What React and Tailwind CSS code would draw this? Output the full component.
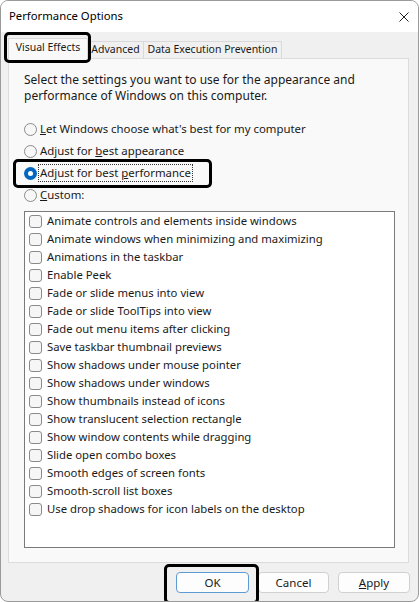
import React from 'react';

const font = { fontFamily: '"Noto Sans", "Open Sans", sans-serif' };

const effects = [
  'Animate controls and elements inside windows',
  'Animate windows when minimizing and maximizing',
  'Animations in the taskbar',
  'Enable Peek',
  'Fade or slide menus into view',
  'Fade or slide ToolTips into view',
  'Fade out menu items after clicking',
  'Save taskbar thumbnail previews',
  'Show shadows under mouse pointer',
  'Show shadows under windows',
  'Show thumbnails instead of icons',
  'Show translucent selection rectangle',
  'Show window contents while dragging',
  'Slide open combo boxes',
  'Smooth edges of screen fonts',
  'Smooth-scroll list boxes',
  'Use drop shadows for icon labels on the desktop',
];

const Radio = ({ checked, children, focus }) => (
  <div className="flex items-center h-[22px] text-[11.4px]">
    {checked ? (
      <span className="w-[13px] h-[13px] rounded-full bg-[#0067c0] flex items-center justify-center flex-none">
        <span className="w-[5px] h-[5px] rounded-full bg-white" />
      </span>
    ) : (
      <span className="w-[13px] h-[13px] rounded-full border border-[#8a8a8a] bg-[#f7f7f7] flex-none" />
    )}
    <span className={`ml-[2px] px-[1px] leading-[16px] ${focus ? 'outline outline-1 outline-dotted outline-[#333]' : ''}`}>{children}</span>
  </div>
);

const Check = ({ label }) => (
  <div className="flex items-center h-[18px]">
    <span className="w-[13px] h-[13px] rounded-[3px] border border-[#8a8a8a] bg-[#f6f6f6] flex-none" />
    <span className="ml-[5px] text-[11.3px]">{label}</span>
  </div>
);

export default function App() {
  return (
    <div className="w-[419px] h-[602px] bg-white">
      <div className="relative w-[419px] h-[602px] flex flex-col bg-[#f0f0f0] border border-[#9a9a9a] rounded-[8px] overflow-hidden text-[12px] text-[#1a1a1a]" style={font}>
        {/* Title bar */}
        <div className="h-[31px] bg-white flex items-center justify-between pl-[8px] pr-[9px] flex-none">
          <span className="text-[11.3px] text-black">Performance Options</span>
          <svg width="10" height="10" viewBox="0 0 10 10">
            <path d="M0.5 0.5 L9.5 9.5 M9.5 0.5 L0.5 9.5" stroke="#222" strokeWidth="1" fill="none" />
          </svg>
        </div>

        {/* Tabs */}
        <div className="flex items-end h-[26px] pl-[7px] flex-none text-[10.5px]">
          <div className="w-[80px] h-[21px] bg-[#f9f9f9] border border-b-0 border-[#d9d9d9] flex items-center justify-center -mb-[1px] relative z-10 pb-[2px]">Visual Effects</div>
          <div className="w-[56px] h-[17px] border-t border-r border-[#d9d9d9] flex items-center justify-center">Advanced</div>
          <div className="w-[138px] h-[17px] border-t border-r border-[#d9d9d9] flex items-center justify-center">Data Execution Prevention</div>
        </div>

        {/* Panel */}
        <div className="ml-[7px] mr-[9px] h-[505px] bg-[#f9f9f9] border border-[#dcdcdc] flex flex-col pl-[15px] pr-[13px] pt-[13px] pb-[14px]">
          <p className="leading-[16px]">
            Select the settings you want to use for the appearance and<br />
            performance of Windows on this computer.
          </p>
          <div className="mt-[14px] flex flex-col">
            <Radio><u>L</u>et Windows choose what's best for my computer</Radio>
            <Radio>Adjust for <u>b</u>est appearance</Radio>
            <Radio checked focus>Adjust for best <u>p</u>erformance</Radio>
            <Radio><u>C</u>ustom:</Radio>
          </div>
          <div className="mt-[5px] flex-1 bg-white border border-[#7a7a7a] pl-[4px] flex flex-col">
            {effects.map((e) => (
              <Check key={e} label={e} />
            ))}
          </div>
        </div>

        {/* Buttons */}
        <div className="flex-1 flex items-start justify-end pt-[9px] pr-[8px] gap-[9px]">
          <button className="w-[73px] h-[21px] rounded-[4px] bg-[#fdfdfd] border border-[#5e9ad3] text-[11.5px]">OK</button>
          <button className="w-[71px] h-[21px] rounded-[4px] bg-[#fdfdfd] border border-[#d0d0d0] text-[11.5px]">Cancel</button>
          <button className="w-[72px] h-[21px] rounded-[4px] bg-[#fdfdfd] border border-[#d0d0d0] text-[11.5px]"><u>A</u>pply</button>
        </div>

        {/* Annotation highlights */}
        <div className="absolute left-[3px] top-[31px] w-[87px] h-[31px] border-[3px] border-black rounded-[5px] pointer-events-none" />
        <div className="absolute left-[12px] top-[158px] w-[199px] h-[29px] border-[3px] border-black rounded-[5px] pointer-events-none" />
        <div className="absolute left-[163px] top-[563px] w-[95px] h-[40px] border-[3px] border-black rounded-[5px] pointer-events-none" />
      </div>
    </div>
  );
}
